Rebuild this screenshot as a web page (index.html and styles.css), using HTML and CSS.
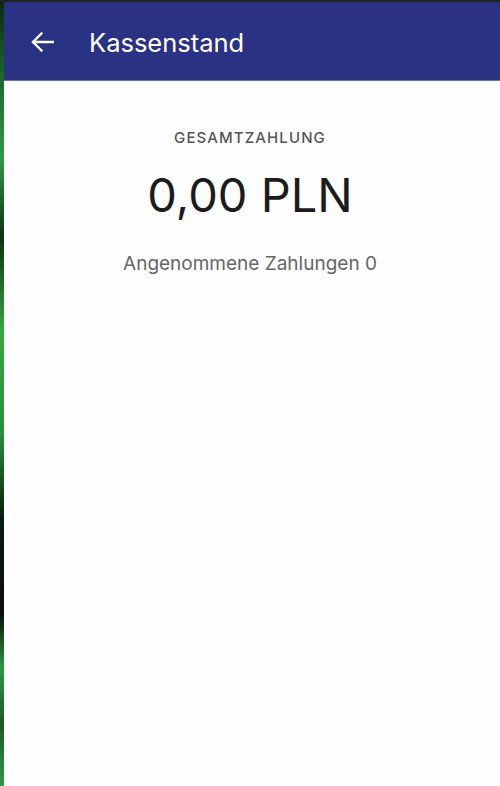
FILE: index.html
```html
<!DOCTYPE html>
<html lang="de">
<head>
<meta charset="utf-8">
<link rel="stylesheet" href="styles.css">
<title>Kassenstand</title>
</head>
<body>
<div class="frame">
  <div class="edge"></div>
  <div class="app">
    <header class="bar">
      <svg class="back" width="23" height="20" viewBox="0 0 23 20" aria-hidden="true">
        <path d="M22 10H2M10.5 1.5L2 10l8.5 8.5" fill="none" stroke="#fff" stroke-width="2.3" stroke-linecap="square"/>
      </svg>
      <h1 class="title">Kassenstand</h1>
    </header>
    <main class="content">
      <div class="label">GESAMTZAHLUNG</div>
      <div class="amount">0,00 PLN</div>
      <div class="count">Angenommene Zahlungen 0</div>
    </main>
  </div>
</div>
</body>
</html>
```
FILE: styles.css
```css
html, body {
  margin: 0;
  padding: 0;
  height: 100%;
}
body {
  background: #fdfefd;
  font-family: Inter, "Noto Sans", sans-serif;
}
.frame {
  display: flex;
  height: 786px;
  border-top: 2px solid #222222;
  box-sizing: border-box;
}
.edge {
  width: 4px;
  flex: none;
  background: linear-gradient(to bottom,
    #0c2a12 0%, #1f6a2c 10%, #2f9a45 20%, #0d3115 30%, #35a940 42%,
    #2a8f3c 55%, #0a1a0c 66%, #081008 78%, #2c9a44 85%, #1c5a28 92%, #2f9a45 100%);
}
.app {
  flex: 1;
  display: flex;
  flex-direction: column;
}
.bar {
  height: 78px;
  flex: none;
  background: #2a3284;
  display: flex;
  align-items: center;
  padding-left: 27px;
  padding-top: 2px;
  box-sizing: border-box;
  gap: 35px;
  box-shadow: 0 1px 0 #6a70a8;
}
.back {
  display: block;
}
.title {
  margin: 0;
  color: #ffffff;
  font-size: 25.5px;
  font-weight: 400;
}
.content {
  display: flex;
  flex-direction: column;
  align-items: center;
  padding-top: 48px;
  margin-left: -4px;
}
.label {
  font-size: 15px;
  font-weight: 500;
  letter-spacing: 1.1px;
  color: #555555;
}
.amount {
  margin-top: 20px;
  font-size: 47px;
  font-weight: 400;
  color: #1c1c1c;
  line-height: 1.2;
}
.count {
  margin-top: 29px;
  font-size: 19px;
  color: #666666;
}
```
